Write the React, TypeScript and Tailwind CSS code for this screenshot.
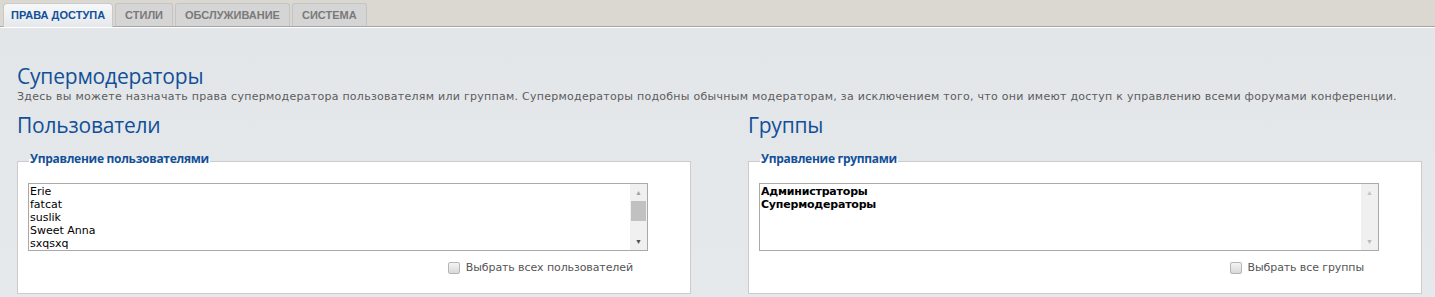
const tabs = ['ПРАВА ДОСТУПА', 'СТИЛИ', 'ОБСЛУЖИВАНИЕ', 'СИСТЕМА'];

function Scrollbar({ active }: { active: boolean }) {
  const arrow = active ? 'text-[#505050]' : 'text-[#b8b8b8]';
  return (
    <div className="flex w-[17px] flex-col items-center bg-[#f0f0f0]">
      <div className={`flex h-[17px] w-full items-center justify-center text-[7px] leading-none ${active ? 'text-[#a3a3a3]' : 'text-[#c4c4c4]'}`}>▲</div>
      <div className="w-full flex-1 px-[1px]">
        {active && <div className="h-[20px] w-full bg-[#c1c1c1]" />}
      </div>
      <div className={`flex h-[17px] w-full items-center justify-center text-[7px] leading-none ${arrow}`}>▼</div>
    </div>
  );
}

function Panel({
  title,
  legend,
  items,
  bold,
  checkLabel,
  scroll,
}: {
  title: string;
  legend: string;
  items: string[];
  bold?: boolean;
  checkLabel: string;
  scroll: boolean;
}) {
  return (
    <div className="flex-1">
      <h2 className="text-[21px] leading-[26px] text-[#115098] font-['Open_Sans','DejaVu_Sans',sans-serif] tracking-[-0.2px]">{title}</h2>
      <div className="relative mt-[23px] h-[133px] border border-[#cccccc] bg-white">
        <div className="absolute left-[11px] top-[-10px] bg-gradient-to-b from-transparent from-50% to-white to-50% px-[1px] text-[12px] font-bold leading-[14px] text-[#115098] font-['Open_Sans','DejaVu_Sans',sans-serif] tracking-[-0.3px]">
          {legend}
        </div>
        <div className="ml-[10px] mt-[21px] flex h-[68px] w-[620px] border border-[#a9a9a9] bg-white">
          <div
            className={`flex-1 pl-[1px] pt-[1px] text-[11px] leading-[13px] text-black font-['DejaVu_Sans',sans-serif] ${
              bold ? 'font-bold tracking-[-0.2px]' : ''
            }`}
          >
            {items.map((it) => (
              <div key={it}>{it}</div>
            ))}
          </div>
          <Scrollbar active={scroll} />
        </div>
        <div className="mt-[9px] flex w-[615px] items-center justify-end gap-[6px] text-[11px] text-[#555] font-['DejaVu_Sans',sans-serif] tracking-[-0.1px]">
          <div className="h-[12px] w-[12px] rounded-[2px] border border-[#b5b5b5] bg-gradient-to-b from-[#f4f4f4] to-[#d9d9d9]" />
          <span>{checkLabel}</span>
        </div>
      </div>
    </div>
  );
}

export default function App() {
  return (
    <div className="h-[297px] w-[1435px] overflow-hidden bg-gradient-to-b from-[#e3e6e9] to-[#e6e9ec]">
      <div className="flex h-[27px] items-end gap-[2px] border-b border-[#a6a6a6] bg-[#dad8d0] pl-[3px] font-['Liberation_Sans',Arial,sans-serif] text-[11px] font-bold">
        {tabs.map((t, i) => (
          <div
            key={t}
            className={
              i === 0
                ? 'relative -mb-[1px] flex h-[24px] items-center rounded-t-[4px] border border-b-0 border-[#c9c9c9] bg-gradient-to-b from-[#f6f7f8] to-[#e6e9ec] px-[7px] text-[#115098]'
                : 'flex h-[23px] items-center rounded-t-[3px] border border-b-0 border-[#c4c4c4] bg-[#d5d5d5] px-[9px] text-[#7a7a7a]'
            }
          >
            {t}
          </div>
        ))}
      </div>
      <div className="h-[1px] bg-white" />
      <div className="pl-[17px] pr-[13px] pt-[34px]">
        <h1 className="text-[21px] leading-[28px] text-[#115098] font-['Open_Sans','DejaVu_Sans',sans-serif] tracking-[-0.2px]">Супермодераторы</h1>
        <p className="text-[11px] leading-[14px] tracking-[0.27px] text-[#5c5c5c] font-['DejaVu_Sans',sans-serif]">
          Здесь вы можете назначать права супермодератора пользователям или группам. Супермодераторы подобны обычным модераторам, за исключением того, что они имеют доступ к управлению всеми форумами конференции.
        </p>
        <div className="mt-[8px] flex gap-[57px]">
          <Panel
            title="Пользователи"
            legend="Управление пользователями"
            items={['Erie', 'fatcat', 'suslik', 'Sweet Anna', 'sxqsxq']}
            checkLabel="Выбрать всех пользователей"
            scroll
          />
          <Panel
            title="Группы"
            legend="Управление группами"
            items={['Администраторы', 'Супермодераторы']}
            bold
            checkLabel="Выбрать все группы"
            scroll={false}
          />
        </div>
      </div>
    </div>
  );
}
